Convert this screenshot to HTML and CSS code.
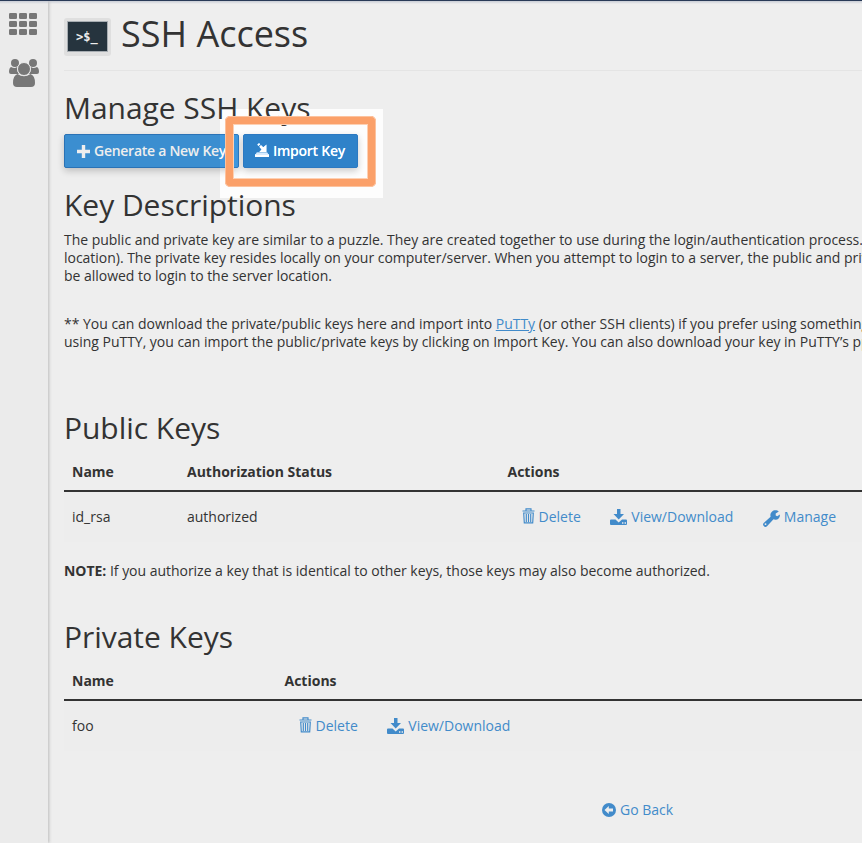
FILE: index.html
```html
<!DOCTYPE html>
<html lang="en">
<head>
<meta charset="utf-8">
<title>SSH Access</title>
<link rel="stylesheet" href="styles.css">
</head>
<body>
<svg class="defs" aria-hidden="true">
  <symbol id="trash" viewBox="0 0 13 16"><path d="M4 2.500V.8h5v1.700M.5 3h12M1.700 5l.6 9.900h8.400l.6-9.900zM4.300 6v8M6.500 6v8M8.700 6v8" fill="none" stroke="currentColor" stroke-width="1.150"/></symbol>
  <symbol id="download" viewBox="0 0 17 16"><path fill="currentColor" fill-rule="evenodd" d="M7 0h3.500v5h3.500L8.700 10.500 3.500 5H7zM1 10.500h4.500L8.700 13.500l3.300-3H16q1 0 1 1V15q0 1-1 1H1q-1 0-1-1v-3.500q0-1 1-1zm11 2.800v1.400h1.400v-1.400zm2.600 0v1.400H16v-1.400z"/></symbol>
  <symbol id="wrench" viewBox="0 0 17 17"><path fill="currentColor" fill-rule="evenodd" d="M15.800 1.500 12.700 3.400v2l1.500.9 2.700-1.700c.3 3-1.800 5.300-4.500 5.200-.8 0-1.400-.2-1.900-.5L4 16.200c-.8.900-2 .9-2.700.2l-.7-.7c-.8-.8-.8-1.900.1-2.700l6.900-6.300C6.500 3 9.600.1 12.500.2c1.300 0 2.400.5 3.300 1.300zM2.500 13.200a.9.900 0 1 0 .1 1.800.9.900 0 0 0-.1-1.800z"/></symbol>
</svg>
<div class="page">
  <nav class="sidebar">
    <svg class="grid-icon" width="28" height="22" viewBox="0 0 28 22" fill="#777"><rect width="8" height="6" rx="1.300"/><rect x="10" width="8" height="6" rx="1.300"/><rect x="20" width="8" height="6" rx="1.300"/><rect y="8" width="8" height="6" rx="1.300"/><rect x="10" y="8" width="8" height="6" rx="1.300"/><rect x="20" y="8" width="8" height="6" rx="1.300"/><rect y="16" width="8" height="6" rx="1.300"/><rect x="10" y="16" width="8" height="6" rx="1.300"/><rect x="20" y="16" width="8" height="6" rx="1.300"/></svg>
    <svg class="users-icon" width="30" height="28" viewBox="0 0 30 28" fill="#777"><circle cx="6" cy="4" r="4"/><circle cx="24" cy="4" r="4"/><path d="M2 8q4 2 6 0 0 5 2 7H2q-2 0-2-2 0-4 2-5zM28 8q-4 2-6 0 0 5-2 7h8q2 0 2-2 0-4-2-5z"/><path d="M8.500 15q6.500 4.500 13 0 4.500 1.500 4.500 9 0 4-4 4H8q-4 0-4-4 0-7.500 4.500-9z"/><circle cx="15" cy="10" r="6.500" stroke="#ebebeb"/></svg>
  </nav>
  <main class="content">
    <header class="page-header">
      <span class="app-icon"><svg width="41" height="31" viewBox="0 0 41 31"><rect width="41" height="31" fill="#26343e"/><text x="9" y="20" class="prompt">&gt;$_</text></svg></span>
      <h1>SSH Access</h1>
    </header>
    <section class="manage">
      <h2>Manage SSH Keys</h2>
      <div class="buttons">
        <a class="btn generate"><svg width="13" height="13" viewBox="0 0 13 13"><path d="M6.500 0v13M0 6.500h13" stroke="#eee" stroke-width="3.400"/></svg><span>Generate a New Key</span></a>
        <a class="btn import"><svg width="14" height="14" viewBox="0 0 14 14" fill="#fff"><path d="M2.200 1.800 4 0l1.300 1.300-1.800 1.800zM4.200 3.800 6 2l2.300 2.300L11.500 1.500V9H4.200l2.300-2.500zM1.800 9.400h10.400l1 1.400H.8zM0 11.300h14V14H0z"/></svg><span>Import Key</span></a>
        <div class="spotlight"><div class="marker"></div></div>
      </div>
    </section>
    <section class="descriptions">
      <h2>Key Descriptions</h2>
      <p>The public and private key are similar to a puzzle. They are created together to use during the login/authentication process.<br>location). The private key resides locally on your computer/server. When you attempt to login to a server, the public and private<br>be allowed to login to the server location.</p>
      <p class="tip">** You can download the private/public keys here and import into <a class="putty">PuTTy</a> (or other SSH clients) if you prefer using something<br>using PuTTY, you can import the public/private keys by clicking on Import Key. You can also download your key in PuTTY’s ppk</p>
    </section>
    <section class="public">
      <h2>Public Keys</h2>
      <div class="row head"><span>Name</span><span>Authorization Status</span><span>Actions</span></div>
      <div class="row"><span>id_rsa</span><span>authorized</span>
        <div class="actions"><a><svg width="13" height="16"><use href="#trash"/></svg>Delete</a><a><svg class="dl" width="17" height="16"><use href="#download"/></svg>View/Download</a><a><svg class="wr" width="17" height="17"><use href="#wrench"/></svg>Manage</a></div></div>
      <p class="note"><b>NOTE:</b> If you authorize a key that is identical to other keys, those keys may also become authorized.</p>
    </section>
    <section class="private">
      <h2>Private Keys</h2>
      <div class="row head"><span>Name</span><span>Actions</span></div>
      <div class="row"><span>foo</span>
        <div class="actions"><a><svg width="13" height="16"><use href="#trash"/></svg>Delete</a><a><svg class="dl" width="17" height="16"><use href="#download"/></svg>View/Download</a></div></div>
    </section>
    <a class="back"><svg width="14" height="14" viewBox="0 0 14 14"><circle cx="7" cy="7" r="7" fill="#428bca"/><path d="m2.500 7 4.300-4v2.600H11v2.800H6.800V11z" fill="#eee"/></svg>Go Back</a>
  </main>
</div>
</body>
</html>
```
FILE: styles.css
```css
* { box-sizing: border-box; }
html, body { margin: 0; overflow: hidden; }
body { background: #eee; color: #333; font: 14px/18px "Open Sans", sans-serif; }
.defs { display: none; }
.page { display: flex; height: 843px; overflow: hidden; border-top: 1px solid #293a57; background: linear-gradient(#c8ccd5, #eee 3px); }
.sidebar { width: 48px; flex: none; padding: 12px 0 0 9px; background: linear-gradient(#c8ccd5, #ebebeb 3px); box-shadow: 1px 0 3px #bbb; }
.sidebar svg { display: block; }
.users-icon { margin-top: 24px; }
.content { flex: 1; min-width: 0; overflow: hidden; padding-left: 16px; white-space: nowrap; }
.page-header { display: flex; height: 70px; border-bottom: 1px solid #e4e4e4; }
.app-icon { width: 47px; height: 38px; margin-top: 17px; padding: 3px; border-radius: 3px; background: #dfdfdf; }
.app-icon svg { display: block; outline: 1px solid #a7adb2; outline-offset: -1px; }
.prompt { font: bold 12px "DejaVu Sans Mono", monospace; fill: #eee; }
h1, h2, p { margin: 0; font-weight: 400; }
h1 { margin: 13px 0 0 10px; font-size: 36px; line-height: 40px; }
h2 { font-size: 30px; line-height: 33px; letter-spacing: -.04px; }
.manage { height: 117px; padding-top: 20px; }
.buttons { position: relative; display: flex; gap: 4px; margin-top: 10px; }
.btn { display: flex; align-items: center; height: 34px; padding-left: 12px; border: 1px solid #2a72b5; border-radius: 2px; background: #3b8ed0; color: #eee; font-weight: 600; box-shadow: 0 3px 7px #0003; }
.generate { width: 175px; }
.generate span { margin-left: 4px; letter-spacing: -.27px; }
.import { width: 115px; background: #2c7abd; color: #fff; padding-left: 11px; }
.import svg { margin-top: -2px; }
.import span { margin-left: 4px; letter-spacing: -.27px; }
.spotlight { position: absolute; left: 156px; top: -25px; width: 164px; height: 89px; padding: 7px 8px 11px 5px; backdrop-filter: brightness(1.065); }
.marker { height: 71px; border: 8px solid #fba069; border-radius: 5px; box-shadow: inset 0 0 0 1px #fdd0b3; outline: 1px solid #fcc29e; outline-offset: -1px; }
.descriptions { height: 223px; }
.descriptions p { margin-top: 10px; letter-spacing: -.022px; }
.descriptions .tip { margin-top: 30px; }
a { color: #428bca; }
.putty { text-decoration: underline; }
.public { height: 209px; }
.row { display: grid; grid-template-columns: 115px 320.500px 1fr; height: 50px; padding: 16px 8px; background: #ededed; }
.private .row { grid-template-columns: 212.500px 1fr; }
.row.head { height: 48px; padding-top: 19px; background: none; border-bottom: 2px solid #333; font-weight: 700; }
.actions { display: flex; gap: 29.500px; padding-left: 14px; }
.actions a { display: flex; gap: 4px; }
.actions .wr { margin-top: 2px; }
.actions .dl { margin-top: 1px; }
.note { margin-top: 20px; letter-spacing: -.026px; }
.note b { font-weight: 700; }
.private { height: 181px; }
.back { display: flex; align-items: center; gap: 4px; margin-left: 538px; }
```
